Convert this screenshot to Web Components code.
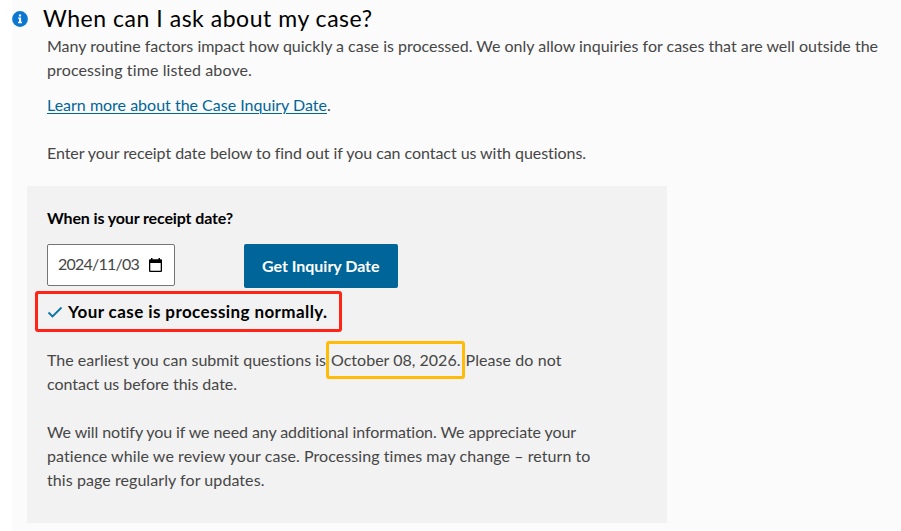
<!DOCTYPE html>
<html lang="en">
<head>
<meta charset="utf-8">
<title>Case Inquiry Date</title>
<style>
  body {
    margin: 0;
    background: #fff;
    font-family: Lato, "Liberation Sans", sans-serif;
    font-size: 16px;
    line-height: 24px;
    color: #464646;
    font-variant-ligatures: none;
  }
</style>
</head>
<body>
<inquiry-section></inquiry-section>
<script>
// one line of copy, tracked so that it fills the given measure
class TextLine extends HTMLElement {
  constructor() {
    super();
    this.attachShadow({ mode: "open" });
    this.shadowRoot.innerHTML = `
    <style>
      :host {
        display: block;
        white-space: nowrap;
      }
      span {
        display: inline-block;
      }
    </style>
    <span><slot></slot></span>
    `;
  }

  connectedCallback() {
    const span = this.shadowRoot.querySelector("span");
    const measure = Number(this.getAttribute("measure"));
    const natural = span.getBoundingClientRect().width;
    const count = this.textContent.length;
    if (measure && count) {
      span.style.letterSpacing = (measure - natural) / count + "px";
    }
  }
}

class InfoIcon extends HTMLElement {
  constructor() {
    super();
    this.attachShadow({ mode: "open" });
    this.shadowRoot.innerHTML = `
    <style>
      :host { display: block; width: 16px; height: 16px; }
      svg { display: block; }
    </style>
    <svg width="16" height="16" viewBox="0 0 16 16">
      <circle cx="8" cy="8" r="7.9" fill="#0b77d0"/>
      <path d="M6.9 3.4h2.2v2H6.9zM6.1 6.4h3v4.4h.9v1.4H6v-1.4h1V7.8h-.9z" fill="#fff"/>
    </svg>
    `;
  }
}

class DateField extends HTMLElement {
  constructor() {
    super();
    this.attachShadow({ mode: "open" });
    this.shadowRoot.innerHTML = `
    <style>
      :host {
        display: flex;
        align-items: center;
        justify-content: space-between;
        box-sizing: border-box;
        width: 128px;
        height: 42px;
        padding: 0 12px 0 10px;
        border: 1px solid #767676;
        border-radius: 2px;
        background: #fff;
      }
      ::slotted(text-line) { margin-bottom: 2px; }
      svg { display: block; }
    </style>
    <slot></slot>
    <svg width="13" height="14" viewBox="0 0 13 14">
      <path fill="#000" fill-rule="evenodd" d="M2 0h1.500v1.200h6V0H11v1.200h1q1 0 1 1V13q0 1-1 1H1q-1 0-1-1V2.200q0-1 1-1h1zM1.300 5v7.700h10.400V5z"/>
    </svg>
    `;
  }
}

class PrimaryButton extends HTMLElement {
  constructor() {
    super();
    this.attachShadow({ mode: "open" });
    this.shadowRoot.innerHTML = `
    <style>
      :host { display: block; }
      button {
        display: block;
        width: 154px;
        height: 44px;
        padding: 0 0 1px 18px;
        border: 0;
        border-radius: 2px;
        background: #006699;
        color: #fff;
        font: bold 16px/24px Lato, "Liberation Sans", sans-serif;
        text-align: left;
      }
    </style>
    <button type="button"><slot></slot></button>
    `;
  }
}

// coloured frame drawn over whatever it wraps
class MarkBox extends HTMLElement {
  constructor() {
    super();
    this.attachShadow({ mode: "open" });
    this.shadowRoot.innerHTML = `
    <style>
      :host {
        display: block;
        position: relative;
      }
      .frame {
        position: absolute;
        inset: var(--mark-inset);
        border: 3px solid var(--mark-color);
        border-radius: 3px;
      }
    </style>
    <slot></slot>
    <div class="frame"></div>
    `;
  }
}

class InquiryPanel extends HTMLElement {
  constructor() {
    super();
    this.attachShadow({ mode: "open" });
    this.shadowRoot.innerHTML = `
    <style>
      :host {
        display: block;
        box-sizing: border-box;
        width: 640px;
        height: 337px;
        padding: 20px;
        background: #f2f2f2;
      }
      .label, .status {
        color: #000;
        font-weight: bold;
      }
      .controls {
        display: flex;
        gap: 69px;
        margin-top: 14px;
      }
      .status {
        display: flex;
        width: 281px;
        height: 24px;
        margin-top: 12px;
        font-size: 17px;
        --mark-inset: -9px -14px -8px -12px;
        --mark-color: #ff2416;
      }
      .status-row {
        display: flex;
        align-items: center;
        gap: 5px;
      }
      .earliest {
        display: flex;
        margin-top: 24px;
      }
      .earliest mark-box {
        margin: 0 5px;
        --mark-inset: -7px -4px -7px -5px;
        --mark-color: #ffbb08;
      }
      .notice {
        margin-top: 24px;
      }
    </style>
    <text-line class="label" measure="186">When is your receipt date?</text-line>
    <div class="controls">
      <date-field><text-line measure="81">2024/11/03</text-line></date-field>
      <primary-button><text-line measure="117.500">Get Inquiry Date</text-line></primary-button>
    </div>
    <mark-box class="status">
      <div class="status-row">
        <svg width="16" height="14" viewBox="0 0 16 14"><path d="M1.500 7.500l4 4L14.500 2.500" fill="none" stroke="#0b74a5" stroke-width="1.800"/></svg>
        <text-line measure="259.500">Your case is processing normally.</text-line>
      </div>
    </mark-box>
    <div class="earliest">
      <text-line measure="279">The earliest you can submit questions is</text-line>
      <mark-box><text-line measure="129.500">October 08, 2026.</text-line></mark-box>
      <text-line measure="96">Please do not</text-line>
    </div>
    <text-line measure="190">contact us before this date.</text-line>
    <div class="notice">
      <text-line measure="529">We will notify you if we need any additional information. We appreciate your</text-line>
      <text-line measure="543.500">patience while we review your case. Processing times may change – return to</text-line>
      <text-line measure="217.500">this page regularly for updates.</text-line>
    </div>
    `;
  }
}

class InquirySection extends HTMLElement {
  constructor() {
    super();
    this.attachShadow({ mode: "open" });
    this.shadowRoot.innerHTML = `
    <style>
      :host {
        display: block;
        box-sizing: border-box;
        height: 531px;
        margin-left: 12px;
        padding-top: 4px;
        background: #fbfbfb;
        overflow: hidden;
      }
      header {
        display: flex;
        align-items: center;
        gap: 15px;
        height: 30px;
      }
      h2 {
        margin: 0 0 2px;
        color: #000;
        font-size: 23px;
        font-weight: normal;
        line-height: 28px;
      }
      .copy {
        padding-left: 35px;
      }
      .more {
        display: flex;
        margin: 11px 0 24px;
      }
      a {
        color: #006699;
        text-decoration: underline;
        text-decoration-thickness: 1px;
        text-underline-offset: 2px;
      }
      inquiry-panel {
        margin: 21px 0 0 15px;
      }
    </style>
    <header>
      <info-icon></info-icon>
      <h2><text-line measure="329.500">When can I ask about my case?</text-line></h2>
    </header>
    <div class="copy">
      <text-line measure="831">Many routine factors impact how quickly a case is processed. We only allow inquiries for cases that are well outside the</text-line>
      <text-line measure="205">processing time listed above.</text-line>
      <div class="more"><text-line measure="280"><a href="#">Learn more about the Case Inquiry Date</a></text-line>.</div>
      <text-line measure="539">Enter your receipt date below to find out if you can contact us with questions.</text-line>
    </div>
    <inquiry-panel></inquiry-panel>
    `;
  }
}

customElements.define("text-line", TextLine);
customElements.define("info-icon", InfoIcon);
customElements.define("date-field", DateField);
customElements.define("primary-button", PrimaryButton);
customElements.define("mark-box", MarkBox);
customElements.define("inquiry-panel", InquiryPanel);
customElements.define("inquiry-section", InquirySection);
</script>
</body>
</html>
